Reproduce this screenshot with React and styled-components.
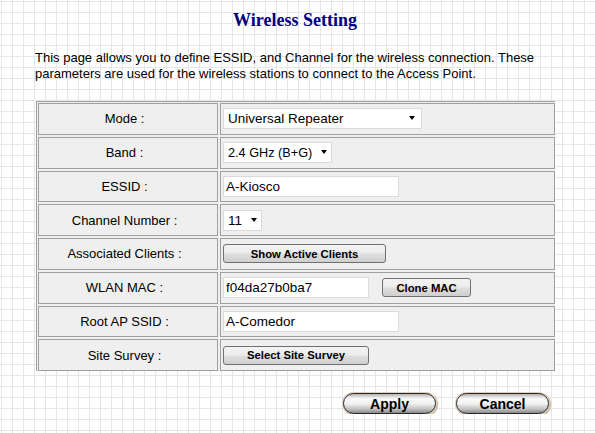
import React from 'react';
import styled, { createGlobalStyle } from 'styled-components';

const GlobalStyle = createGlobalStyle`
  html, body {
    margin: 0;
    padding: 0;
  }
  body {
    background-color: #ffffff;
    background-image:
      linear-gradient(#e6e6e6 1px, transparent 1px),
      linear-gradient(90deg, #e6e6e6 1px, transparent 1px);
    background-size: 11px 11px;
    background-position: 1px 1px;
    font-family: "Liberation Sans", Arial, sans-serif;
    color: #000;
  }
`

const Page = styled.div`
  padding: 10px 0 0 35px;
  width: 535px;
`
const Title = styled.h1`
  margin: 0;
  width: 520px;
  text-align: center;
  font-family: "Liberation Serif", "Times New Roman", serif;
  font-size: 18px;
  line-height: 20px;
  font-weight: bold;
  color: #000080;
`
const Intro = styled.p`
  margin: 20px 0 0;
  font-size: 13px;
  line-height: 16px;
`
const SettingsTable = styled.div`
  display: grid;
  grid-template-columns: 180px 335px;
  grid-auto-rows: 31.75px;
  gap: 2px;
  width: max-content;
  margin: 19px 0 0 1px;
  padding: 1px 0 0 1px;
  border-top: 1px solid #a0a0a0;
  border-left: 1px solid #a0a0a0;
  background: #efefef;
`
const Cell = styled.div`
  box-sizing: border-box;
  border: 1px solid #a0a0a0;
  background: #efefef;
  display: flex;
  align-items: center;
`
const LabelCell = styled(Cell)`
  justify-content: center;
  padding-right: 7px;
  font-size: 13px;
`
const ValueCell = styled(Cell)`
  padding-left: 2px;
  gap: 13px;
`
const SelectWrap = styled.div`
  position: relative;
  display: inline-block;
  width: ${p => p.w}px;
  height: 21px;
`
const Select = styled.select`
  appearance: none;
  box-sizing: border-box;
  width: 100%;
  height: 100%;
  margin: 0;
  padding: 0 0 0 4px;
  border: 1px solid #dadada;
  border-radius: 0;
  background: #fff;
  font-family: "Liberation Sans", Arial, sans-serif;
  font-size: ${p => p.fs || 13.5}px;
  color: #000;
  outline: none;
`
const Arrow = styled.span`
  position: absolute;
  right: ${p => p.r}px;
  top: 8px;
  width: 0;
  height: 0;
  border-left: 3.5px solid transparent;
  border-right: 3.5px solid transparent;
  border-top: 4px solid #000;
  pointer-events: none;
`
const TextInput = styled.input`
  box-sizing: border-box;
  width: ${p => p.w}px;
  height: 21px;
  margin: 0;
  padding: 0 0 0 2px;
  border: 1px solid #dadada;
  background: #fff;
  font-family: "Liberation Sans", Arial, sans-serif;
  font-size: 13.5px;
  color: #000;
  outline: none;
`
const FormButton = styled.button`
  box-sizing: border-box;
  width: ${p => p.w}px;
  height: 19px;
  margin: 0;
  padding: 0;
  border: 1px solid #707070;
  border-radius: 3px;
  background: linear-gradient(#f4f4f4 0%, #ececec 45%, #dedede 55%, #cfcfcf 100%);
  font-family: "Liberation Sans", Arial, sans-serif;
  font-size: 11.3px;
  font-weight: bold;
  color: #000;
`
const ButtonBar = styled.div`
  display: flex;
  justify-content: flex-end;
  gap: 20px;
  width: 514px;
  margin-top: 22px;
`
const PillButton = styled.button`
  box-sizing: border-box;
  width: 93px;
  height: 21px;
  margin: 0;
  padding: 0;
  border: 1.5px solid #262626;
  border-radius: 11px;
  background: linear-gradient(#b4b4b4 0%, #fbfbfb 25%, #f2f2f2 50%, #c4c4c4 78%, #8a8a8a 100%);
  box-shadow: 0 0 0 1px #ddd1be, 1px 1px 1px 1px #c2b298;
  font-family: "Liberation Sans", Arial, sans-serif;
  font-size: 14px;
  font-weight: bold;
  color: #000;
`

const Dropdown = ({ w, r, fs, value, options }) => (
  <SelectWrap w={w}>
    <Select fs={fs} defaultValue={value}>
      {options.map(o => <option key={o}>{o}</option>)}
    </Select>
    <Arrow r={r} />
  </SelectWrap>
);

function App() {
  return (
    <Page>
      <GlobalStyle />
      <Title>Wireless Setting</Title>
      <Intro>
        This page allows you to define ESSID, and Channel for the wireless connection. These
        parameters are used for the wireless stations to connect to the Access Point.
      </Intro>

      <SettingsTable>
        <LabelCell>Mode :</LabelCell>
        <ValueCell>
          <Dropdown w={199} r={7} value="Universal Repeater"
            options={['AP', 'Client', 'WDS', 'AP+WDS', 'Universal Repeater']} />
        </ValueCell>

        <LabelCell>Band :</LabelCell>
        <ValueCell>
          <Dropdown w={109} r={5} fs={12.7} value="2.4 GHz (B+G)"
            options={['2.4 GHz (B)', '2.4 GHz (G)', '2.4 GHz (B+G)']} />
        </ValueCell>

        <LabelCell>ESSID :</LabelCell>
        <ValueCell>
          <TextInput w={176} defaultValue="A-Kiosco" />
        </ValueCell>

        <LabelCell>Channel Number :</LabelCell>
        <ValueCell>
          <Dropdown w={39} r={5} value="11"
            options={['1', '2', '3', '4', '5', '6', '7', '8', '9', '10', '11']} />
        </ValueCell>

        <LabelCell>Associated Clients :</LabelCell>
        <ValueCell>
          <FormButton w={163}>Show Active Clients</FormButton>
        </ValueCell>

        <LabelCell>WLAN MAC :</LabelCell>
        <ValueCell>
          <TextInput w={146} defaultValue="f04da27b0ba7" />
          <FormButton w={89}>Clone MAC</FormButton>
        </ValueCell>

        <LabelCell>Root AP SSID :</LabelCell>
        <ValueCell>
          <TextInput w={176} defaultValue="A-Comedor" />
        </ValueCell>

        <LabelCell>Site Survey :</LabelCell>
        <ValueCell>
          <FormButton w={146}>Select Site Survey</FormButton>
        </ValueCell>
      </SettingsTable>

      <ButtonBar>
        <PillButton>Apply</PillButton>
        <PillButton>Cancel</PillButton>
      </ButtonBar>
    </Page>
  );
}

export default App;
